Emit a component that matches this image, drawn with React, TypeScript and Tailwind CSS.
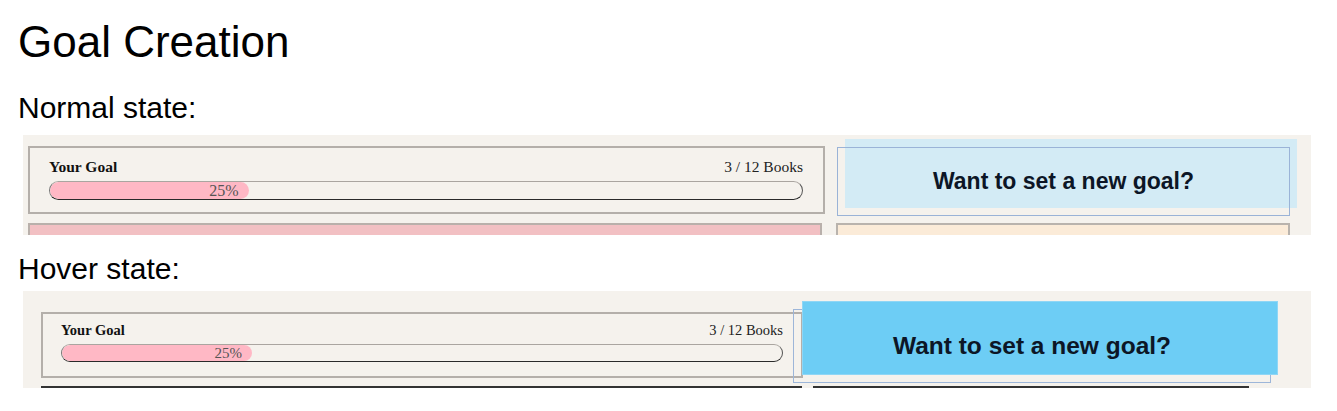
const serif = { fontFamily: '"Liberation Serif", "Times New Roman", serif' };
const sans = { fontFamily: '"Liberation Sans", Arial, sans-serif' };

function GoalCard({ hover }: { hover?: boolean }) {
  return (
    <div
      className={`shrink-0 border-2 border-[#b4afaa] bg-[#f5f2ed] flex flex-col ${
        hover
          ? "w-[762px] h-[66px] pt-[8px] pl-[18px] pr-[18px] gap-[5px]"
          : "w-[797px] h-[68px] pt-[10px] pl-[19px] pr-[20px] gap-[5px]"
      }`}
      style={serif}
    >
      <div
        className={`flex justify-between text-[#222] ${
          hover ? "text-[14.5px] leading-[17px]" : "text-[15.5px] leading-[18px]"
        }`}
      >
        <span className="font-bold text-[#111]">Your Goal</span>
        <span>3 / 12 Books</span>
      </div>
      <div
        className={`rounded-full border border-[#aaa5a0] border-b-[#2a2a2a] border-r-[#555] border-l-[#777] overflow-hidden ${
          hover ? "h-[18px]" : "h-[19px]"
        }`}
      >
        <div
          className={`h-full w-[26.4%] bg-[#ffb8c5] rounded-full flex items-center justify-end pr-[10px] text-[#555] ${
            hover ? "text-[15px]" : "text-[16px]"
          }`}
        >
          25%
        </div>
      </div>
    </div>
  );
}

function NewGoalButton({ hover }: { hover?: boolean }) {
  if (hover) {
    return (
      <div className="grid shrink-0 relative z-10 w-[478px] h-[72px] -ml-[10px] -mt-[3px]">
        <div className="col-start-1 row-start-1 border border-[#9db6d9]" />
        <div className="col-start-1 row-start-1 translate-x-[9px] -translate-y-[8px] h-[74px] w-[476px] bg-[#6dcdf5] border border-[#8fd6f5]" />
        <div
          className="col-start-1 row-start-1 relative flex items-center justify-center font-bold text-[24.5px] text-[#0c1626]"
          style={sans}
        >
          Want to set a new goal?
        </div>
      </div>
    );
  }
  return (
    <div className="grid shrink-0 relative z-10 w-[453px] h-[67px] mt-[1px]">
      <div className="col-start-1 row-start-1 translate-x-[8px] -translate-y-[8px] h-[69px] w-[452px] bg-[#d3ebf5]" />
      <div
        className="col-start-1 row-start-1 relative border border-[#9ab3d7] flex items-center justify-center font-bold text-[23px] text-[#0c1626]"
        style={sans}
      >
        Want to set a new goal?
      </div>
    </div>
  );
}

export default function App() {
  return (
    <div className="w-[1337px] h-[411px] bg-white overflow-hidden pl-[18px] text-black" style={sans}>
      <h1 className="mt-[17px] text-[44px] leading-[50px] font-normal">Goal Creation</h1>
      <p className="mt-[24px] text-[30px] leading-[34px]">Normal state:</p>

      {/* normal state screenshot */}
      <div className="mt-[10px] ml-[5px] w-[1288px] h-[100px] bg-[#f5f2ed] overflow-hidden pl-[5px] pt-[11px]">
        <div className="flex gap-[12px] items-start">
          <GoalCard />
          <NewGoalButton />
        </div>
        <div className="flex mt-[9px]">
          <div className="w-[794px] h-[30px] border-2 border-[#b9b0ab] bg-[#f2c0c3]" />
          <div className="ml-[14px] w-[454px] h-[30px] border-2 border-[#b9b3ad] bg-[#fbebd8]" />
        </div>
      </div>

      <p className="mt-[17px] text-[30px] leading-[34px]">Hover state:</p>

      {/* hover state screenshot */}
      <div className="mt-[5px] ml-[5px] w-[1288px] h-[97px] bg-[#f5f2ed] overflow-hidden pl-[18px] pt-[21px]">
        <div className="flex items-start">
          <GoalCard hover />
          <NewGoalButton hover />
        </div>
        <div className="flex mt-[5px]">
          <div className="w-[761px] h-[30px] border-2 border-[#333] bg-[#f2c0c3]" />
          <div className="ml-[11px] w-[436px] h-[30px] border-2 border-[#333] bg-[#fbf3e8]" />
        </div>
      </div>
    </div>
  );
}
